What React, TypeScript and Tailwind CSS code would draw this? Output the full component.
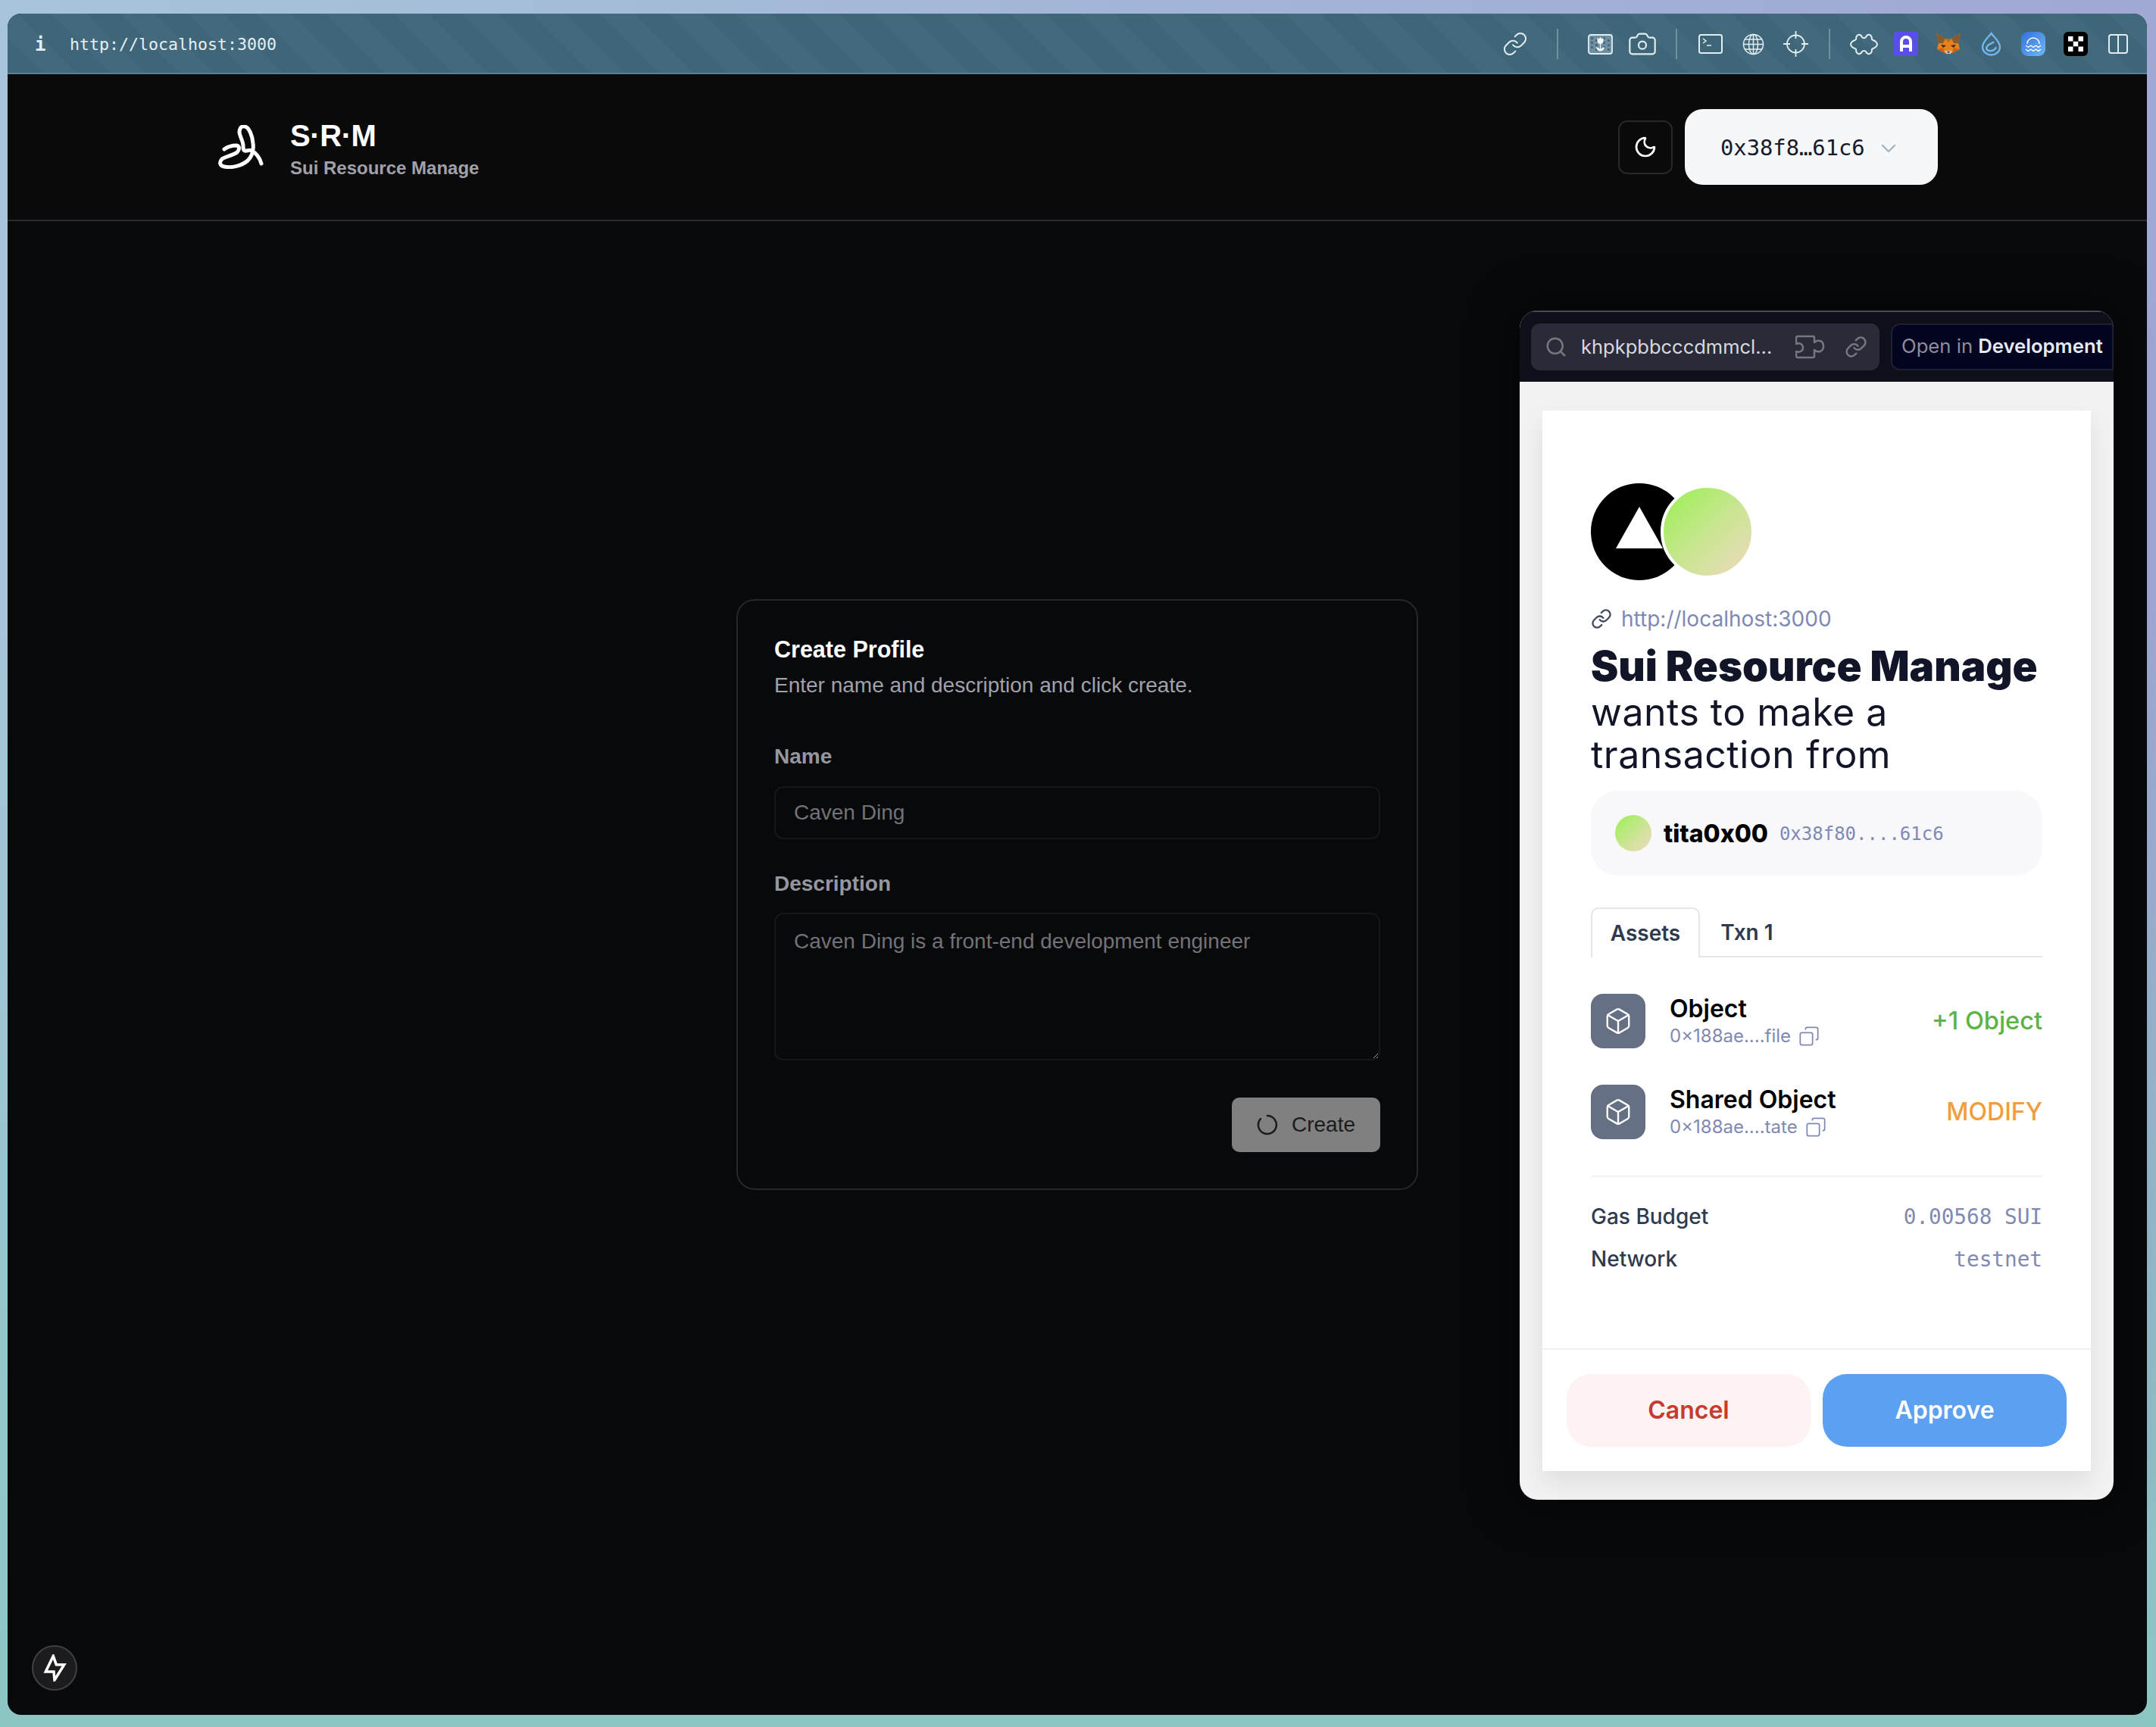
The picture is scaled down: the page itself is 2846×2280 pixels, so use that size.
import React from 'react';
import { Box, Camera, ChevronDown, Columns2, Copy, Link, Moon, Search } from 'lucide-react';

const Sep = ({ className }: { className: string }) => <div className={`h-[40px] w-[2px] bg-[#6f92a2] ${className}`} />;

const Slot = ({ children }: { children: React.ReactNode }) => (
    <div className="flex h-[32px] w-[32px] items-center justify-center text-[#e2edf2] [&>svg]:shrink-0">{children}</div>
);

const FlowerIcon = () => (
    <svg width="33" height="27" viewBox="0 0 33 27">
        <rect x="1" y="1" width="31" height="25" rx="3" fill="#6f90a0" stroke="#e2edf2" strokeWidth="1.800" />
        {[4, 10, 20, 26].map(x => [4, 10, 16].map(y => <rect key={`${x}-${y}`} x={x} y={y + (x % 4 === 0 ? 0 : 3)} width="3" height="3" fill="#48697b" />))}
        <path d="M12.500 5 l2 1.500 2-2.500 2 2.500 2-1.500 v4 a4 4 0 0 1-8 0z" fill="#f1f6f8" />
        <path d="M16.500 13 v9 M16.500 22 c-3 0-4-2-5-4 3 0 4 2 5 4 M16.500 22 c3 0 4-2 5-4 -3 0-4 2-5 4" stroke="#f1f6f8" strokeWidth="1.200" fill="#f1f6f8" />
    </svg>
);

const TerminalIcon = () => (
    <svg width="32" height="26" viewBox="0 0 32 26" fill="none" stroke="#e2edf2" strokeWidth="2">
        <rect x="1" y="1" width="30" height="24" rx="2.500" />
        <path d="M6 6 l4 3 -4 3 M11 15 h6" strokeWidth="1.500" />
    </svg>
);

const GlobeIcon = () => (
    <svg width="29" height="29" viewBox="0 0 29 29" fill="none" stroke="#e2edf2" strokeWidth="1.500">
        <circle cx="14.500" cy="14.500" r="13" />
        <ellipse cx="14.500" cy="14.500" rx="6" ry="13" />
        <path d="M14.500 1.500 v26 M3 8 h23 M1.500 14.500 h26 M3 21 h23" />
    </svg>
);

const CrosshairIcon = () => (
    <svg width="33" height="34" viewBox="0 0 33 34" fill="none" stroke="#e2edf2" strokeWidth="1.800">
        <circle cx="16.500" cy="17" r="11.500" />
        <path d="M16.500 0 v10 M16.500 24 v10 M0 17 h9 M24 17 h9" />
    </svg>
);

const PuzzleIcon = () => (
    <svg width="37" height="29" viewBox="0 0 37 29" fill="none" stroke="#e2edf2" strokeWidth="2" strokeLinejoin="round">
        <path d="M11 2 C14 1 15 3 16 5 C17 6.500 20 6.500 21 5 C22 3 23 1 26 2 C29 3 29 6 29 8 C29 9 33 9 35 12 C36.500 14 36.500 15 35 17 C33 20 29 20 29 21 C29 23 29 26 26 27 C23 28 22 26 21 24 C20 22.500 17 22.500 16 24 C15 26 14 28 11 27 C8 26 8 23 8 21 C8 20 4 20 2 17 C0.500 15 0.500 14 2 12 C4 9 8 9 8 8 C8 6 8 3 11 2z" />
    </svg>
);

const FoxIcon = () => (
    <svg width="32" height="30" viewBox="0 0 32 30">
        <polygon points="0,1 12,8 20,8 32,1 29,14 31,22 21,27 11,27 1,22 3,14" fill="#e8821e" />
        <polygon points="0,1 12,8 9,14 3,14" fill="#8a5a2b" />
        <polygon points="32,1 20,8 23,14 29,14" fill="#8a5a2b" />
        <polygon points="12,8 20,8 16,13" fill="#b56a2b" />
        <polygon points="6,16 13,17 9,20" fill="#3b2a1d" />
        <polygon points="26,16 19,17 23,20" fill="#3b2a1d" />
        <polygon points="11,24 21,24 19,28 13,28" fill="#d7c1b3" />
        <polygon points="14,25 18,25 16,27" fill="#1f1a17" />
        <polygon points="1,22 11,27 9,20" fill="#cd6116" />
        <polygon points="31,22 21,27 23,20" fill="#cd6116" />
    </svg>
);

const ToolbarRight = () => (
    <div className="flex items-center pr-[22px]">
        <Slot><Link size={34} strokeWidth={1.4} /></Slot>
        <Sep className="mx-[39px]" />
        <div className="flex items-center gap-[24px]">
            <Slot><FlowerIcon /></Slot>
            <Slot><Camera size={40} strokeWidth={1.3} /></Slot>
        </div>
        <Sep className="mx-[28px]" />
        <div className="flex items-center gap-[24px]">
            <Slot><TerminalIcon /></Slot>
            <Slot><GlobeIcon /></Slot>
            <Slot><CrosshairIcon /></Slot>
        </div>
        <Sep className="mx-[28px]" />
        <div className="flex items-center gap-[24px]">
            <Slot><PuzzleIcon /></Slot>
            <Slot>
                <svg width="32" height="32" viewBox="0 0 32 32">
                    <rect width="32" height="32" rx="2" fill="#5a4ee8" />
                    <path d="M10 26 V13 a6 6 0 0 1 12 0 V26 M10 19 H22" fill="none" stroke="#fff" strokeWidth="4" />
                </svg>
            </Slot>
            <Slot><FoxIcon /></Slot>
            <Slot>
                <svg width="27" height="32" viewBox="0 0 27 32" fill="none" stroke="#73b5ea" strokeWidth="2.400">
                    <path d="M13.500 2 C10 7 2 13 2 20 a11.500 10.500 0 0 0 23 0 C25 13 17 7 13.500 2z" />
                    <path d="M7 22 c0-6 8-6 10-9 M7 22 c2 5 11 4 13-2" />
                </svg>
            </Slot>
            <Slot>
                <svg width="32" height="32" viewBox="0 0 32 32" fill="none" stroke="#fff" strokeWidth="1.400">
                    <defs>
                        <linearGradient id="walrus" x1="0" y1="0" x2="1" y2="1">
                            <stop offset="0" stopColor="#3370dd" />
                            <stop offset="1" stopColor="#70b8f6" />
                        </linearGradient>
                    </defs>
                    <rect width="32" height="32" rx="9" fill="url(#walrus)" stroke="none" />
                    <path d="M8 16 a8 8 0 0 1 16 0" />
                    <path d="M6 18 l3.300 2.500 3.400-2.500 3.300 2.500 3.400-2.500 3.300 2.500 3.300-2.500" />
                    <path d="M6 23 l3.300 2.500 3.400-2.500 3.300 2.500 3.400-2.500 3.300 2.500 3.300-2.500" />
                </svg>
            </Slot>
            <Slot>
                <svg width="32" height="32" viewBox="0 0 32 32">
                    <rect width="32" height="32" rx="6" fill="#000" />
                    <g fill="#fff">
                        <rect x="6" y="6" width="6.500" height="6.500" />
                        <rect x="19.500" y="6" width="6.500" height="6.500" />
                        <rect x="12.750" y="12.750" width="6.500" height="6.500" />
                        <rect x="6" y="19.500" width="6.500" height="6.500" />
                        <rect x="19.500" y="19.500" width="6.500" height="6.500" />
                    </g>
                </svg>
            </Slot>
            <Slot><Columns2 size={32} strokeWidth={1.5} /></Slot>
        </div>
    </div>
);

const Toolbar = () => (
    <div className="box-border flex h-[80px] shrink-0 items-center justify-between border-b-2 border-[#5a8193] bg-[repeating-linear-gradient(45deg,#3e6578_0_32px,#43697c_32px_64px)] pt-[2px] font-['DejaVu_Sans_Mono',monospace]">
        <div className="flex items-center pt-[2px] pl-[36px] text-[#e6eff4]">
            <span className="w-[46px] text-[24px] font-bold">i</span>
            <span className="text-[21.600px]">http://localhost:3000</span>
        </div>
        <ToolbarRight />
    </div>
);

const Header = () => (
    <header className="box-border flex h-[194px] shrink-0 items-center justify-between border-b-2 border-[#2a2a2e] bg-[#0a0a0b] pr-[276px] pl-[278px] font-['Liberation_Sans',sans-serif]">
        <div className="flex items-center gap-[35px]">
            <svg width="60" height="58" viewBox="0 0 60 58" fill="none" stroke="#fff" strokeWidth="5" strokeLinecap="round" strokeLinejoin="round">
                <path d="M8 32 C12 29 18 27 24 27 C29 28 28 33 25 36 C20 40 8 42 5 45 C1 49 2 54 8 55 C18 57 31 54 39 47 C45 41 47 32 46 24 C45 14 41 3 35 2 C30 1 28 5 28 10 C29 16 33 22 33 27 C33 31 33 33 35 34 C38 35 41 32 44 34 C50 37 55 44 57 51" />
            </svg>
            <div className="flex flex-col pt-[6px]">
                <span className="text-[40px] leading-[46px] font-bold tracking-[-0.4px] text-white">S·R·M</span>
                <span className="mt-[4px] text-[24px] leading-[32px] font-bold text-[#a1a1aa]">Sui Resource Manage</span>
            </div>
        </div>
        <div className="flex items-center gap-[16px]">
            <div className="flex h-[71px] w-[72px] items-center justify-center rounded-[12px] border-2 border-[#27272a] text-white">
                <Moon size={32} strokeWidth={2} />
            </div>
            <div className="flex h-[100px] w-[334px] items-center rounded-[24px] bg-[#f6f7f9] pt-[4px] pl-[47px] font-['DejaVu_Sans_Mono',monospace] text-[#161a2b]">
                <span className="text-[28.800px]">0x38f8…61c6</span>
                <ChevronDown size={32} strokeWidth={1.800} className="ml-[15px] text-[#a3b3c2]" />
            </div>
        </div>
    </header>
);

const ProfileCard = () => (
    <div className="box-border h-[780px] w-[900px] rounded-[24px] border-2 border-[#27272a] bg-[#08090b] px-[48px] pt-[44px] font-['Liberation_Sans',sans-serif]">
        <h2 className="text-[30.500px] leading-[40px] font-bold text-white">Create Profile</h2>
        <p className="mt-[10px] text-[28px] leading-[36px] text-[#a1a1aa]">Enter name and description and click create.</p>
        <label className="mt-[58px] block text-[28px] leading-[36px] font-bold text-[#96969e]">Name</label>
        <input
            disabled
            defaultValue="Caven Ding"
            className="mt-[21px] box-border block h-[70px] w-full rounded-[12px] border-2 border-[#17171a] bg-transparent px-[24px] text-[28px] text-[#727277]"
        />
        <label className="mt-[41px] block text-[28px] leading-[36px] font-bold text-[#96969e]">Description</label>
        <textarea
            disabled
            defaultValue="Caven Ding is a front-end development engineer"
            className="mt-[20px] box-border block h-[195px] w-full rounded-[12px] border-2 border-[#17171a] bg-transparent px-[24px] py-[18px] text-[28px] leading-[36px] text-[#727277]"
        />
        <div className="mt-[49px] flex justify-end">
            <button className="flex h-[72px] w-[196px] items-center justify-center gap-[18px] rounded-[10px] bg-[#808080] text-[28px] text-[#1b1b1f]">
                <svg width="28" height="28" viewBox="0 0 28 28" fill="none" stroke="#1b1b1f" strokeWidth="2.500" strokeLinecap="round">
                    <path d="M5 6 A12 12 0 1 0 14 2" />
                </svg>
                Create
            </button>
        </div>
    </div>
);

const AssetRow = ({ name, id, badge, badgeClass }: { name: string; id: string; badge: string; badgeClass: string }) => (
    <div className="flex h-[72px] items-center">
        <div className="flex h-[72px] w-[72px] items-center justify-center rounded-[16px] bg-[#667085] text-white">
            <Box size={38} strokeWidth={1.5} />
        </div>
        <div className="ml-[32px] flex flex-col">
            <span className="-mt-[2px] text-[32px] leading-[40px] font-semibold text-black">{name}</span>
            <span className="mt-[1px] flex items-center gap-[10px] text-[24px] leading-[30px] text-[#8189b3]">
                {id}
                <Copy size={28} strokeWidth={1.5} className="-scale-x-100" />
            </span>
        </div>
        <span className={`ml-auto font-medium ${badgeClass}`}>{badge}</span>
    </div>
);

const WalletPopup = () => (
    <div className="absolute top-[410px] left-[2006px] flex h-[1570px] w-[784px] flex-col overflow-hidden rounded-[24px] bg-[#f2f2f2] font-['Inter',sans-serif] shadow-[0_0_60px_rgba(0,0,0,0.6)]">
        <div className="box-border flex h-[94px] shrink-0 items-center border-t-2 border-[#4a4a55] bg-[#0f0f1a] pl-[15px]">
            <div className="flex h-[62px] w-[460px] items-center rounded-[12px] bg-[#2a2a38] pl-[18px] text-[#d8d8df]">
                <Search size={30} strokeWidth={2} className="text-[#77777f]" />
                <span className="ml-[18px] w-[255px] text-[25.500px] whitespace-nowrap">khpkpbbcccdmmcl...</span>
                <svg width="40" height="32" viewBox="0 0 40 32" fill="none" stroke="#77777f" strokeWidth="2.500" strokeLinejoin="round" className="ml-[28px]">
                    <path d="M3 2 h20 a2 2 0 0 1 2 2 v6 c4-4 12-3 12 5 s-8 9-12 5 v8 a2 2 0 0 1-2 2 h-20 a2 2 0 0 1-2-2 v-6 c5 2 9-1 9-5 s-4-7-9-5 v-8 a2 2 0 0 1 2-2z" />
                </svg>
                <Link size={30} strokeWidth={2} className="ml-[25px] text-[#77777f]" />
            </div>
            <div className="ml-[15px] flex h-[62px] flex-1 items-center rounded-l-[12px] border-2 border-[#1e1f33] bg-[#03041f] pb-[2px] pl-[12px] text-[25.700px] whitespace-nowrap">
                <span className="text-[#8d8d9e]">Open in</span>
                <span className="ml-[7px] font-semibold text-[#e6eaf5]">Development</span>
            </div>
        </div>
        <div className="mx-[30px] mt-[38px] flex h-[1400px] flex-col bg-white shadow-[0_16px_32px_rgba(0,0,0,0.08)]">
            <div className="flex flex-1 flex-col px-[64px] pt-[96px]">
                <div className="relative h-[128px] w-[216px]">
                    <svg width="128" height="128" viewBox="0 0 128 128">
                        <circle cx="64" cy="64" r="64" fill="#000" />
                        <polygon points="64,31 33,86 95,86" fill="#fff" />
                    </svg>
                    <div className="absolute top-[2px] left-[92px] h-[124px] w-[124px] rounded-full border-4 border-white bg-gradient-to-br from-[#96f04a] to-[#f0d8c0]" />
                </div>
                <div className="mt-[31px] flex h-[40px] items-center gap-[12px] text-[28px] text-[#7f88b3]">
                    <Link size={28} strokeWidth={2} className="text-[#44495f]" />
                    http://localhost:3000
                </div>
                <h1 className="mt-[10px] text-[54.600px] leading-[64px] font-black whitespace-nowrap text-[#121527]">Sui Resource Manage</h1>
                <p className="mt-[1px] text-[50px] leading-[56px] tracking-[0.5px] text-[#121527]">wants to make a<br />transaction from</p>
                <div className="mt-[20px] flex h-[112px] items-center rounded-[36px] bg-[#f8f8fb] pl-[32px]">
                    <div className="h-[48px] w-[48px] rounded-full bg-gradient-to-br from-[#96f04a] to-[#f0d8c0]" />
                    <span className="ml-[16px] pt-[2px] text-[32px] font-extrabold text-black">tita0x00</span>
                    <span className="ml-[15px] pt-[2px] font-['DejaVu_Sans_Mono',monospace] text-[24px] text-[#8189b3]">0x38f80....61c6</span>
                </div>
                <div className="mt-[42px] flex h-[66px] border-b-2 border-[#e5e5e8] text-[28px] font-semibold text-[#2f3a4f]">
                    <div className="-mb-[2px] flex h-[66px] w-[144px] items-center justify-center rounded-t-[10px] border-2 border-b-0 border-[#e5e5e8] bg-white">Assets</div>
                    <div className="flex w-[124px] items-center justify-center pt-[2px]">Txn 1</div>
                </div>
                <div className="mt-[48px] flex flex-col gap-[48px]">
                    <AssetRow name="Object" id="0×188ae....file" badge="+1 Object" badgeClass="text-[32.500px] text-[#5cb346]" />
                    <AssetRow name="Shared Object" id="0×188ae....tate" badge="MODIFY" badgeClass="text-[32px] text-[#f39c3d]" />
                </div>
                <div className="mt-[48px] h-[2px] bg-[#f2f2f5]" />
                <div className="mt-[32px] flex flex-col gap-[16px] text-[28px] font-medium text-[#2f3a4f]">
                    <div className="flex h-[40px] items-center justify-between">
                        Gas Budget
                        <span className="pt-[2px] font-['DejaVu_Sans_Mono',monospace] text-[27.700px] font-normal text-[#8189b3]">0.00568 SUI</span>
                    </div>
                    <div className="flex h-[40px] items-center justify-between">
                        Network
                        <span className="pt-[2px] font-['DejaVu_Sans_Mono',monospace] text-[27.700px] font-normal text-[#8189b3]">testnet</span>
                    </div>
                </div>
            </div>
            <div className="flex gap-[16px] border-t-2 border-[#f2f2f5] p-[32px]">
                <button className="h-[96px] flex-1 rounded-[32px] bg-[#fdf3f3] text-[32px] font-semibold text-[#c93a2c]">Cancel</button>
                <button className="h-[96px] flex-1 rounded-[32px] bg-[#5ca0f2] text-[32px] font-semibold text-white">Approve</button>
            </div>
        </div>
    </div>
);

export default function App() {
    return (
        <div className="relative box-border h-[2280px] w-[2846px] overflow-hidden bg-[linear-gradient(to_bottom,transparent_35%,#8cc6c3_100%),linear-gradient(to_right,#a6c4da,#a0a8d4)] pt-[18px] pr-[12px] pb-[16px] pl-[10px]">
            <div className="flex h-full flex-col overflow-hidden rounded-[18px] bg-[#08090b]">
                <Toolbar />
                <Header />
                <main className="flex flex-1 justify-center pt-[499px]">
                    <ProfileCard />
                </main>
            </div>
            <WalletPopup />
            <div className="absolute top-[2172px] left-[42px] flex h-[60px] w-[60px] items-center justify-center rounded-full border-2 border-[#3f3f46] bg-[#1c1c1f]">
                <svg width="32" height="36" viewBox="0 0 32 36" fill="none" stroke="#fff" strokeWidth="3.500">
                    <polygon points="14.300,2.300 4.300,23 15,23 16,34 28.700,13.700 18.300,13.700" />
                </svg>
            </div>
        </div>
    );
}
